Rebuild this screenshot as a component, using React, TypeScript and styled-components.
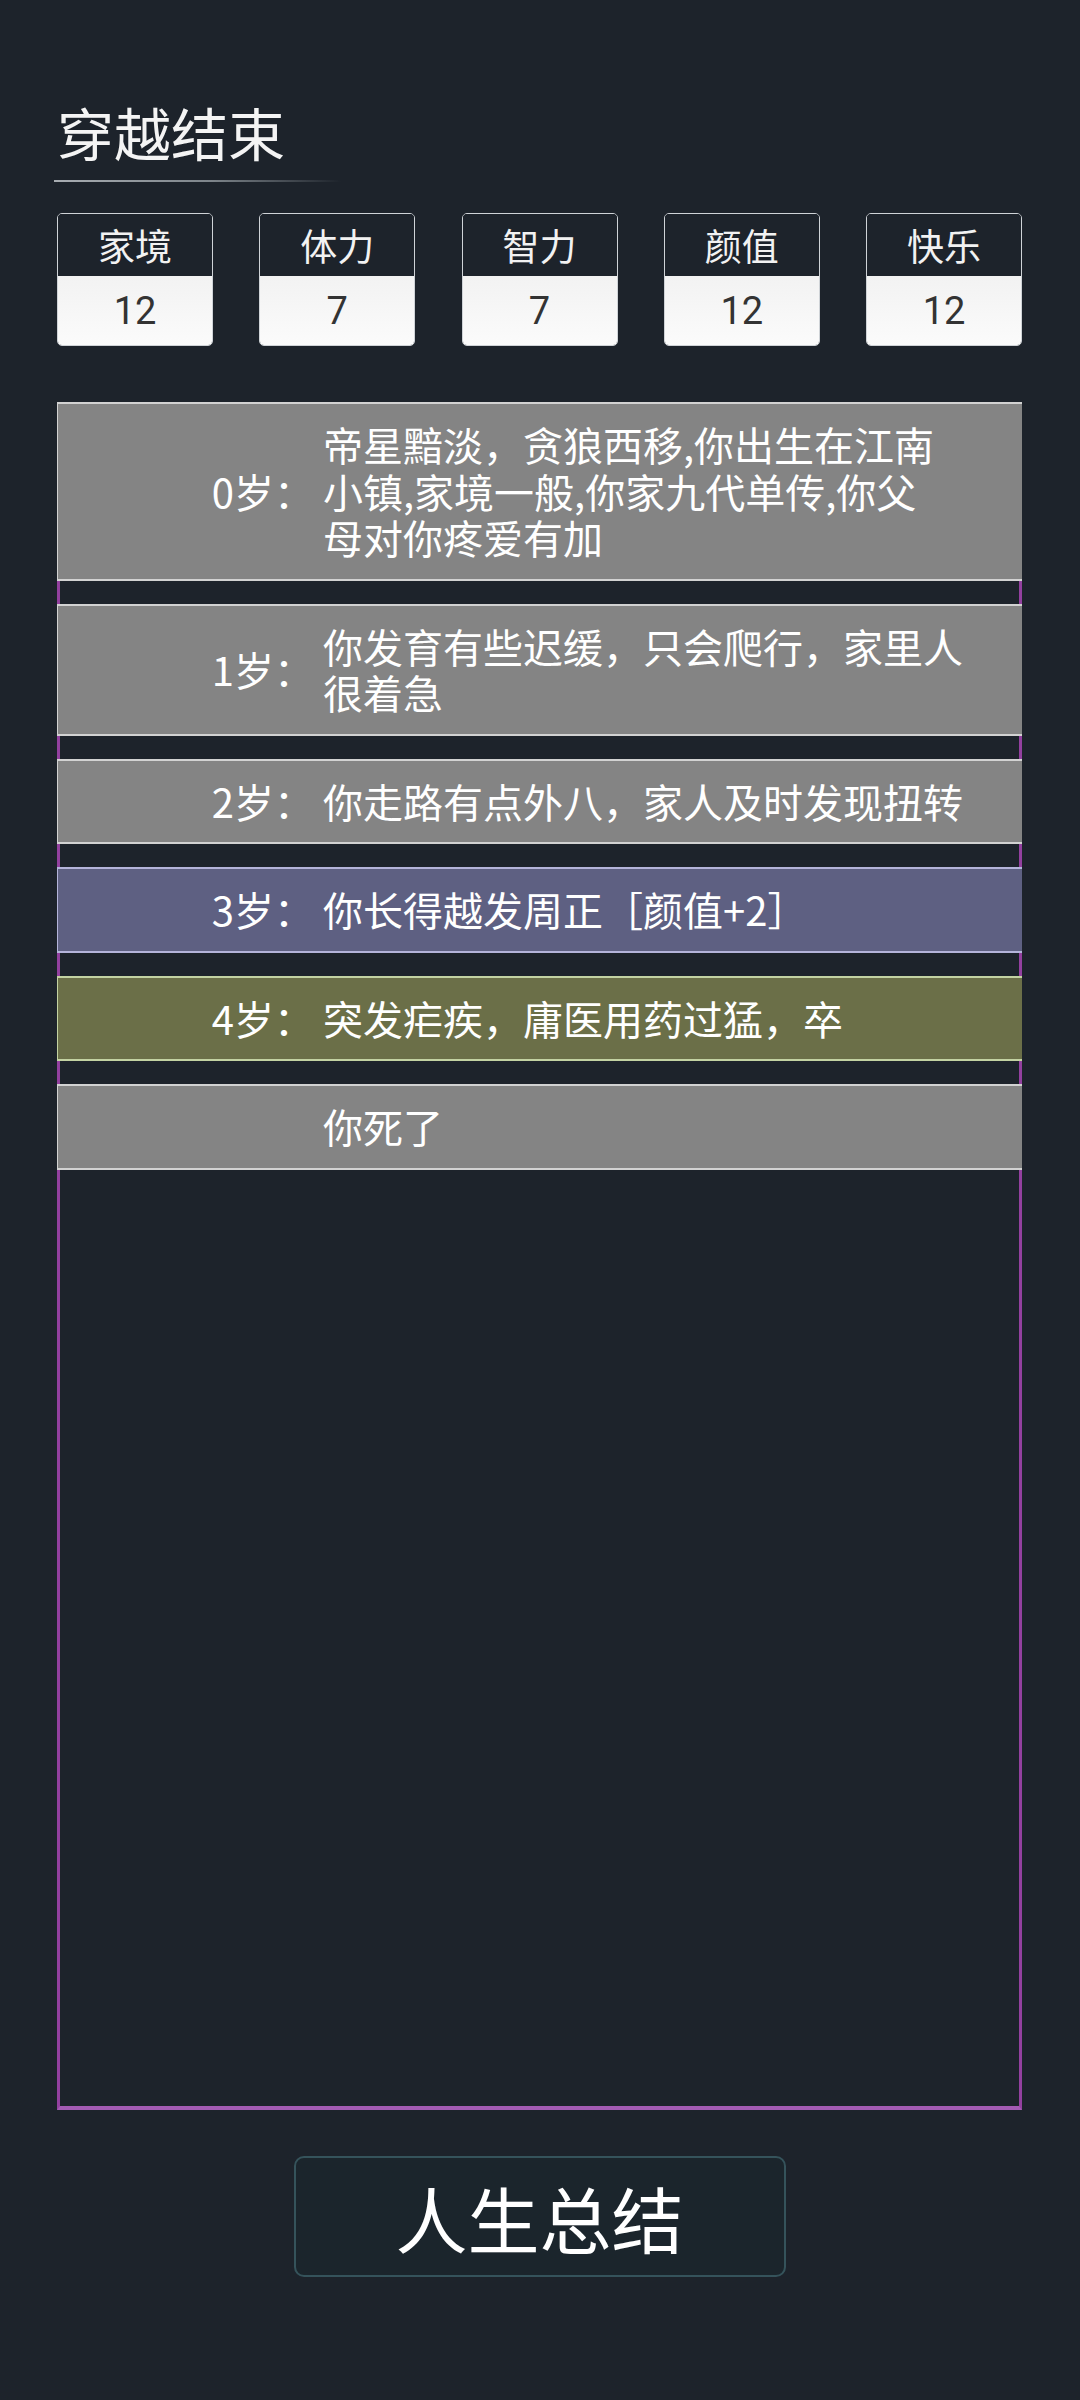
import React from "react";
import styled, { createGlobalStyle } from "styled-components";

const GlobalStyle = createGlobalStyle`
  html, body {
    margin: 0;
    padding: 0;
    background: #1d232b;
  }
  body {
    font-family: "Noto Sans CJK SC", "Noto Sans", sans-serif;
    color: #f2f2f2;
  }
`;

const Page = styled.div`
  width: 1080px;
  min-height: 2400px;
  box-sizing: border-box;
  padding: 96px 58px 0 57px;
  display: flex;
  flex-direction: column;
`;

const Title = styled.h1`
  margin: 0;
  font-size: 57px;
  font-weight: 400;
  line-height: 70px;
  color: #f4f4f4;
  padding-bottom: 14px;
`;

const TitleLine = styled.div`
  width: 287px;
  height: 2px;
  margin-left: -3px;
  background: linear-gradient(to right, #a8adb2 0%, #7d848a 55%, rgba(120, 128, 134, 0) 100%);
`;

const StatsRow = styled.div`
  display: flex;
  justify-content: space-between;
  margin-top: 31px;
`;

const StatBox = styled.div`
  width: 156px;
  height: 133px;
  box-sizing: border-box;
  border: 1px solid #cfd3d7;
  border-radius: 5px;
  overflow: hidden;
  display: flex;
  flex-direction: column;
`;

const StatLabel = styled.div`
  height: 62px;
  background: #1d232b;
  display: flex;
  align-items: center;
  justify-content: center;
  font-size: 37px;
  color: #f2f2f2;
`;

const StatValue = styled.div`
  flex: 1;
  background: linear-gradient(#f2f2f2, #fbfbfb);
  display: flex;
  align-items: center;
  justify-content: center;
  font-family: Roboto, "Liberation Sans", sans-serif;
  font-size: 38px;
  color: #333;
`;

const Panel = styled.div`
  margin-top: 56px;
  height: 1708px;
  box-sizing: border-box;
  border-left: 3px solid #93409f;
  border-right: 3px solid #93409f;
  border-bottom: 4px solid #a35bb3;
  display: flex;
  flex-direction: column;
  gap: 23px;
`;

type Tone = "normal" | "purple" | "olive";

const tones: Record<Tone, { bg: string; edge: string }> = {
  normal: { bg: "#848484", edge: "#d2d2d2" },
  purple: { bg: "#5e6082", edge: "#b4b4da" },
  olive: { bg: "#6b6f48", edge: "#c3d2a2" },
};

const Item = styled.div<{ $tone: Tone }>`
  margin: 0 -3px;
  display: flex;
  align-items: center;
  padding: 17px 43px 18px 0;
  background: ${(p) => tones[p.$tone].bg};
  border-top: 2px solid ${(p) => tones[p.$tone].edge};
  border-bottom: 2px solid ${(p) => tones[p.$tone].edge};
  border-left: 1px solid ${(p) => tones[p.$tone].edge};
  font-size: 40px;
  line-height: 46.5px;
  color: #fff;
`;

const Age = styled.div`
  width: 256px;
  padding-right: 9px;
  flex-shrink: 0;
  text-align: right;
  white-space: nowrap;
`;

const Text = styled.div`
  flex: 1;
  white-space: pre-line;
`;

const Button = styled.button`
  align-self: center;
  margin-top: 46px;
  width: 492px;
  height: 121px;
  box-sizing: border-box;
  border: 2px solid #35535b;
  border-radius: 10px;
  background: #1b252c;
  color: #fff;
  font-family: "Noto Sans CJK SC", sans-serif;
  font-size: 72px;
  line-height: 1;
  padding: 0;
  cursor: pointer;
`;

const stats = [
  { label: "家境", value: 12 },
  { label: "体力", value: 7 },
  { label: "智力", value: 7 },
  { label: "颜值", value: 12 },
  { label: "快乐", value: 12 },
];

const events: { age?: number; text: string; tone: Tone }[] = [
  {
    age: 0,
    text: "帝星黯淡，贪狼西移,你出生在江南\n小镇,家境一般,你家九代单传,你父\n母对你疼爱有加",
    tone: "normal",
  },
  { age: 1, text: "你发育有些迟缓，只会爬行，家里人\n很着急", tone: "normal" },
  { age: 2, text: "你走路有点外八，家人及时发现扭转", tone: "normal" },
  { age: 3, text: "你长得越发周正［颜值+2］", tone: "purple" },
  { age: 4, text: "突发疟疾，庸医用药过猛，卒", tone: "olive" },
  { text: "你死了", tone: "normal" },
];

export default function App() {
  return (
    <>
      <GlobalStyle />
      <Page>
        <Title>穿越结束</Title>
        <TitleLine />
        <StatsRow>
          {stats.map((s) => (
            <StatBox key={s.label}>
              <StatLabel>{s.label}</StatLabel>
              <StatValue>{s.value}</StatValue>
            </StatBox>
          ))}
        </StatsRow>
        <Panel>
          {events.map((e, i) => (
            <Item key={i} $tone={e.tone}>
              <Age>{e.age !== undefined ? `${e.age}岁：` : ""}</Age>
              <Text>{e.text}</Text>
            </Item>
          ))}
        </Panel>
        <Button>人生总结</Button>
      </Page>
    </>
  );
}
